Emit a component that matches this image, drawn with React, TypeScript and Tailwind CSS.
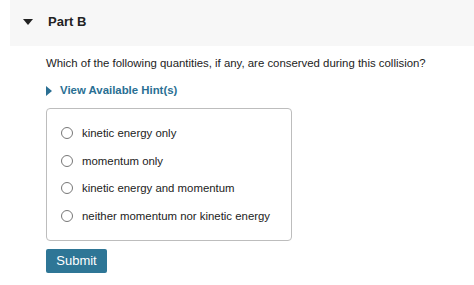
export default function App() {
  const options = [
    'kinetic energy only',
    'momentum only',
    'kinetic energy and momentum',
    'neither momentum nor kinetic energy',
  ]
  return (
    <div className="w-[474px] h-[285px] bg-white overflow-hidden text-[#222]" style={{ fontFamily: '"Liberation Sans", Arial, sans-serif' }}>
      <div className="ml-[10px] h-[46px] bg-[#f7f7f7] flex items-center pb-[2px]">
        <span className="ml-[13px] w-0 h-0 border-l-[5px] border-r-[5px] border-t-[6px] border-l-transparent border-r-transparent border-t-[#222]" />
        <span className="ml-[15px] text-[13px] font-bold">Part B</span>
      </div>
      <div className="pl-[46px]">
        <p className="mt-[10px] text-[11.4px] leading-[14px]">Which of the following quantities, if any, are conserved during this collision?</p>
        <div className="mt-[12px] flex items-center">
          <span className="w-0 h-0 border-t-[5px] border-b-[5px] border-l-[6px] border-t-transparent border-b-transparent border-l-[#2a6f93]" />
          <span className="ml-[8px] text-[11.4px] font-bold text-[#2a6f93]">View Available Hint(s)</span>
        </div>
        <div className="mt-[9px] w-[246px] h-[133px] border border-[#bdbdbd] rounded-[4px] pt-[17px] pl-[14px] flex flex-col gap-[13.7px]">
          {options.map(o => (
            <label key={o} className="flex items-center h-[14px]">
              <span className="w-[12px] h-[12px] rounded-full border border-[#777] bg-white" />
              <span className="ml-[9px] text-[11.4px] leading-[14px]">{o}</span>
            </label>
          ))}
        </div>
        <button className="mt-[8px] w-[61px] h-[24px] bg-[#2e7696] rounded-[2px] text-white text-[13px] flex items-center justify-center">Submit</button>
      </div>
    </div>
  )
}
